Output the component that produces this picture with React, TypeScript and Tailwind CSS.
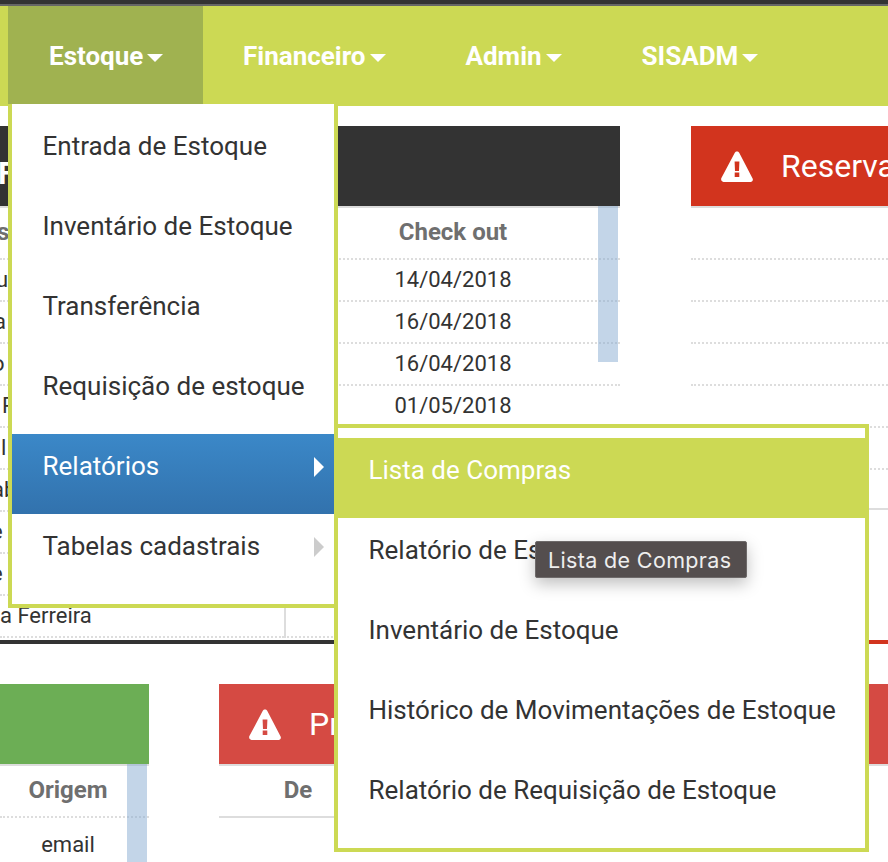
const navItems = ["Estoque", "Financeiro", "Admin", "SISADM"];
const menuItems = ["Entrada de Estoque", "Inventário de Estoque", "Transferência", "Requisição de estoque", "Relatórios", "Tabelas cadastrais"];
const subItems = ["Lista de Compras", "Relatório de Estoque", "Inventário de Estoque", "Histórico de Movimentações de Estoque", "Relatório de Requisição de Estoque"];

// only the bits of the names that stick out from under the menu
const names = [
  { text: "u", pad: "pl-0 -ml-[4px]" },
  { text: "a", pad: "pl-0 -ml-[6px]" },
  { text: "o", pad: "pl-0 -ml-[8px]" },
  { text: "P", pad: "pl-[2px]" },
  { text: "l", pad: "pl-[1px]" },
  { text: "ab", pad: "pl-0 -ml-[8px]" },
  { text: "e", pad: "pl-0 -ml-[9px]" },
  { text: "e", pad: "pl-0 -ml-[9px]" },
  { text: "a Ferreira", pad: "pl-0" },
];
const dates = ["14/04/2018", "16/04/2018", "16/04/2018", "01/05/2018", "", "", "", "", ""];

const Warning = () => (
  <svg width="32" height="31" viewBox="0 0 32 31" className="shrink-0">
    <path
      fill="#fff"
      fillRule="evenodd"
      d="M16 .5c1 0 1.700.5 2.200 1.300l13.400 25.800c.8 1.600-.2 3.400-2.100 3.400H2.500C.6 30.500-.4 28.700.4 27.100L13.800 1.800C14.300 1 15 .5 16 .5zM13.600 10.500l.4 9.500h4l.4-9.500h-4.800zM13.700 21.500v4.500h4.600v-4.500h-4.600z"
    />
  </svg>
);

const PanelHead = ({ color, title }: { color: string; title?: string }) => (
  <div className={`h-[82px] border-b-2 border-[#ddd] ${color}`}>
    {title && (
      <div className="h-20 pl-[30px] flex items-center gap-[28px] text-white text-[32px]">
        <Warning />
        <span>{title}</span>
      </div>
    )}
  </div>
);

const App = () => {
  return (
    <div className="relative w-[888px] h-[862px] overflow-hidden bg-white text-[#333] text-[22px] font-['Roboto',sans-serif]">
      <div className="h-1 bg-[#333]" />
      <div className="h-[2px] bg-[#666]" />

      {/* Navigation */}
      <nav className="relative z-10 h-[100px] pl-2 flex bg-[#ccd954]">
        {navItems.map((item, id) => (
          <div
            key={id}
            className={`relative h-full flex items-center gap-1 text-white font-bold text-[26px] ${id === 0 ? "w-[195px] pl-[41px] bg-[#a0b250]" : "px-10"}`}
          >
            <span>{item}</span>
            <span className="mt-1 border-x-8 border-t-8 border-x-transparent border-t-white" />
            {id === 0 && (
              <div className="absolute left-0 top-[98px] w-[330px] h-[504px] py-[10px] border-x-4 border-b-4 border-[#ccd954] bg-white font-normal text-[#333] text-[26px]">
                {menuItems.map((m, i) => (
                  <div
                    key={i}
                    className={`relative h-20 pl-[30.500px] pr-[10px] pt-[12px] flex justify-between ${i === 4 ? "text-white bg-gradient-to-b from-[#3b88c8] to-[#3272ad]" : ""}`}
                  >
                    <span className="leading-10 whitespace-nowrap">{m}</span>
                    {i >= 4 && (
                      <span className={`mt-[11px] h-0 border-y-[10px] border-l-[10px] border-y-transparent ${i === 4 ? "border-l-white" : "border-l-[#ccc]"}`} />
                    )}
                    {i === 4 && (
                      <div className="absolute left-full top-[-10px] w-[535px] h-[428px] py-[10px] border-4 border-[#ccd954] bg-white text-[#333]">
                        {subItems.map((s, j) => (
                          <div
                            key={j}
                            className={`h-20 -ml-1 pl-[34.500px] pt-[12px] leading-10 whitespace-nowrap ${j === 0 ? "bg-[#ccd954] text-white" : ""}`}
                          >
                            {s}
                          </div>
                        ))}
                      </div>
                    )}
                  </div>
                ))}
              </div>
            )}
          </div>
        ))}
      </nav>

      {/* First row of panels */}
      <div className="mt-5 flex">
        <div className="relative w-[620px] shrink-0 h-[518px] border-b-4 border-[#333] overflow-hidden">
          <PanelHead color="bg-[#333]" />
          <div className="absolute left-0 top-[32px] text-white font-bold text-[31px] leading-none -ml-[2px]">F</div>
          <div className="grid grid-cols-[284px_1fr]">
            <div className="h-[52px] border-b-2 border-dotted border-[#ddd] overflow-hidden font-bold text-[#6f6f6f] text-[24px] leading-[48px]">
              <span className="-ml-[3px] block">s</span>
            </div>
            <div className="h-[52px] border-b-2 border-l-2 border-b-[#ddd] border-l-[#ddd] [border-bottom-style:dotted] text-center font-bold text-[#6f6f6f] text-[24px] leading-[48px]">
              Check out
            </div>
            {names.map((n, i) => (
              <div key={i} className="contents">
                <div className="h-[42px] border-b-2 border-dotted border-[#ddd] overflow-hidden leading-10">
                  <div className={`whitespace-nowrap ${n.pad}`}>{n.text}</div>
                </div>
                <div className="h-[42px] border-b-2 border-l-2 border-b-[#ddd] border-l-[#ddd] [border-bottom-style:dotted] text-center leading-10">
                  {dates[i]}
                </div>
              </div>
            ))}
          </div>
          <div className="absolute left-[598px] top-20 w-5 h-[156px] bg-[#87abd1]/50" />
        </div>

        <div className="ml-[71px] w-[300px] shrink-0 h-[518px] border-b-4 border-[#d2341e]">
          <PanelHead color="bg-[#d2341e]" title="Reserva" />
          <div className="h-[52px] border-b-2 border-dotted border-[#ddd]" />
          {[0, 1, 2, 3, 4].map((r) => (
            <div key={r} className="h-[42px] border-b-2 border-dotted border-[#ddd]" />
          ))}
          <div className="h-[40px] border-b-2 border-[#ddd]" />
        </div>
      </div>

      {/* Second row of panels */}
      <div className="mt-10 flex">
        <div className="relative w-[149px] shrink-0">
          <PanelHead color="bg-[#6cae55]" />
          <div className="h-[52px] w-[149px] border-b-2 border-dotted border-[#ddd] pr-[13px] text-center font-bold text-[#6f6f6f] text-[24px] leading-[48px]">
            Origem
          </div>
          <div className="pr-[13px] text-center leading-[54px]">email</div>
          <div className="absolute left-[127px] top-20 w-5 h-[100px] bg-[#87abd1]/50" />
        </div>

        <div className="ml-[70px] w-[700px] shrink-0">
          <PanelHead color="bg-[#d54a43]" title="Pr" />
          <div className="w-[158px] h-[52px] border-b-2 border-[#ddd] text-center font-bold text-[#6f6f6f] text-[24px] leading-[48px]">
            De
          </div>
        </div>
      </div>

      {/* Tooltip */}
      <div className="absolute z-20 left-[535px] top-[541px] w-[212px] h-[37px] rounded-[2px] border border-[#6e6a6a] bg-[#544e4e] pl-3 text-[#eee] text-[21.500px] leading-[37px] tracking-[0.35px] whitespace-nowrap font-['Inter',sans-serif] shadow-[0_6px_16px_rgba(0,0,0,0.25)]">
        Lista de Compras
      </div>
    </div>
  );
};

export default App;
